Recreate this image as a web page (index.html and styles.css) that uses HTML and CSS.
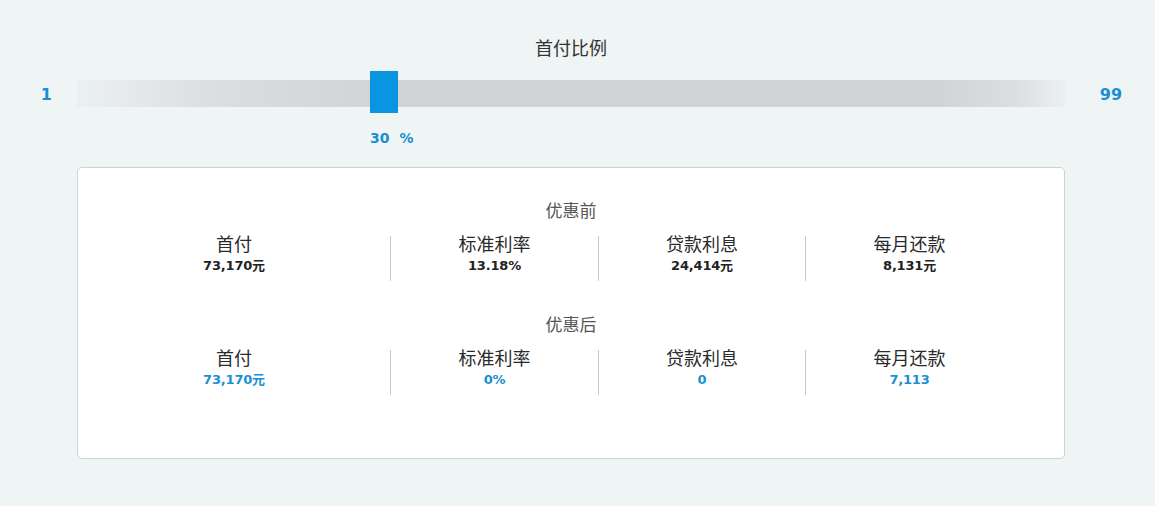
FILE: index.html
```html
<!DOCTYPE html>
<html lang="zh-CN">
<head>
<meta charset="utf-8">
<title>首付比例</title>
<link rel="stylesheet" href="styles.css">
</head>
<body>
<div class="page">
  <div class="title">首付比例</div>
  <div class="slider">
    <div class="end end-min">1</div>
    <div class="track">
      <div class="thumb-wrap" style="left: 29.66%">
        <div class="thumb"></div>
        <div class="value"><span>30</span><span class="pct">%</span></div>
      </div>
    </div>
    <div class="end end-max">99</div>
  </div>
  <div class="card">
    <div class="section">
      <div class="heading">优惠前</div>
      <div class="row">
        <div class="cell"><div class="label">首付</div><div class="num">73,170元</div></div>
        <div class="cell"><div class="label">标准利率</div><div class="num">13.18%</div></div>
        <div class="cell"><div class="label">贷款利息</div><div class="num">24,414元</div></div>
        <div class="cell"><div class="label">每月还款</div><div class="num">8,131元</div></div>
      </div>
    </div>
    <div class="section">
      <div class="heading">优惠后</div>
      <div class="row">
        <div class="cell"><div class="label">首付</div><div class="num blue">73,170元</div></div>
        <div class="cell"><div class="label">标准利率</div><div class="num blue">0%</div></div>
        <div class="cell"><div class="label">贷款利息</div><div class="num blue">0</div></div>
        <div class="cell"><div class="label">每月还款</div><div class="num blue">7,113</div></div>
      </div>
    </div>
  </div>
</div>
</body>
</html>
```

FILE: styles.css
```css
html, body {
  margin: 0;
  padding: 0;
}
body {
  background: #eff4f4;
  font-family: "Noto Sans CJK SC", "DejaVu Sans", sans-serif;
  color: #333;
  width: 1155px;
  height: 506px;
  overflow: hidden;
}
.page {
  padding-top: 35px;
}
.title {
  width: 988px;
  margin-left: 77px;
  text-align: center;
  font-size: 18px;
  line-height: 24px;
  color: #333;
}
.slider {
  display: grid;
  grid-template-columns: 77px 988px 90px;
  height: 42px;
  margin-top: 12px;
}
.end {
  font-family: "DejaVu Sans", sans-serif;
  font-weight: bold;
  color: #1b8fd2;
  font-size: 16px;
  line-height: 20px;
  align-self: center;
  margin-top: 5px;
}
.end-min {
  text-align: right;
  padding-right: 25px;
}
.end-max {
  text-align: center;
  padding-left: 2px;
}
.track {
  position: relative;
  height: 27px;
  margin-top: 9px;
  background: linear-gradient(to right,
    rgba(208, 212, 213, 0.12) 0px,
    #dcdfe0 130px,
    #d0d4d5 300px,
    #d0d4d5 860px,
    #dcdfe0 940px,
    rgba(208, 212, 213, 0.12) 988px);
}
.thumb-wrap {
  position: absolute;
  top: -9px;
  width: 28px;
}
.thumb {
  width: 28px;
  height: 42px;
  background: #0995df;
}
.value {
  position: absolute;
  top: 57px;
  left: 0;
  white-space: nowrap;
  font-family: "DejaVu Sans", sans-serif;
  font-weight: bold;
  font-size: 14px;
  line-height: 20px;
  color: #1b8fd2;
}
.value .pct {
  margin-left: 10px;
}
.card {
  box-sizing: border-box;
  width: 988px;
  height: 292px;
  margin-left: 77px;
  margin-top: 54px;
  background: #fff;
  border: 1px solid #d0d3d4;
  border-radius: 5px;
  padding-top: 30px;
}
.section + .section {
  margin-top: 31px;
}
.heading {
  text-align: center;
  font-size: 17px;
  line-height: 24px;
  color: #555;
}
.row {
  display: grid;
  grid-template-columns: 312px 208px 207px 208px;
  margin-top: 14px;
}
.cell {
  height: 45px;
  text-align: center;
}
.cell + .cell {
  border-left: 1px solid #c4c7c8;
}
.label {
  font-size: 18px;
  line-height: 20px;
  margin-top: -3px;
  color: #2a2a2a;
}
.num {
  font-family: "DejaVu Sans", "Noto Sans CJK SC", sans-serif;
  font-weight: bold;
  font-size: 13px;
  letter-spacing: -0.2px;
  line-height: 16px;
  margin-top: 5px;
  color: #222;
}
.num.blue {
  color: #1b8fd2;
}
```
